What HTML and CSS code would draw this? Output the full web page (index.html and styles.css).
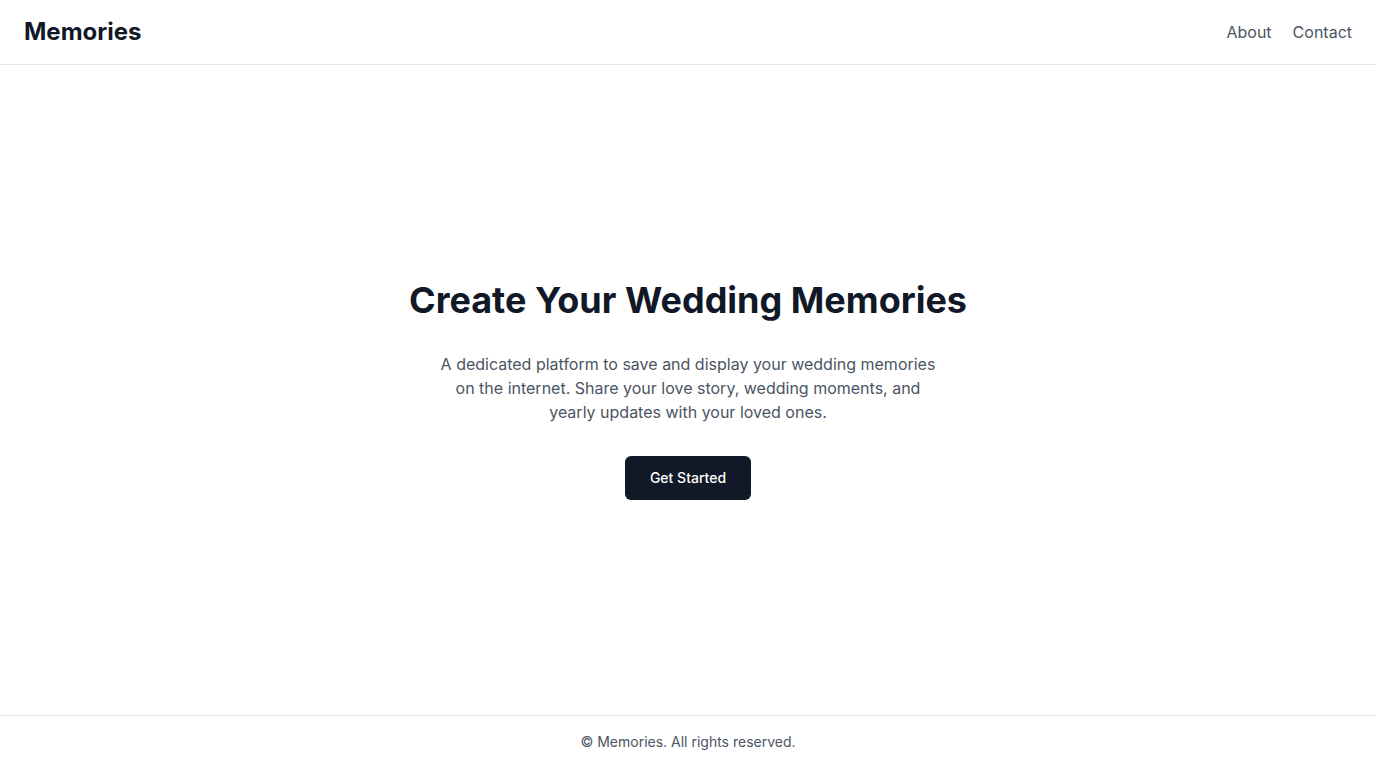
FILE: index.html
```html
<!DOCTYPE html>
<html lang="en">
<head>
<meta charset="utf-8">
<title>Memories</title>
<link rel="stylesheet" href="styles.css">
</head>
<body>
<div class="page">
  <header class="header">
    <a class="logo" href="#">Memories</a>
    <nav class="nav">
      <a href="#">About</a>
      <a href="#">Contact</a>
    </nav>
  </header>
  <main class="main">
    <section class="hero">
      <h1 class="title">Create Your Wedding Memories</h1>
      <p class="lead">A dedicated platform to save and display your wedding memories on the internet. Share your love story, wedding moments, and yearly updates with your loved ones.</p>
      <a class="btn" href="#">Get Started</a>
    </section>
  </main>
  <footer class="footer">© Memories. All rights reserved.</footer>
</div>
</body>
</html>
```
FILE: styles.css
```css
* { box-sizing: border-box; }
html, body { margin: 0; padding: 0; }
body {
  font-family: Inter, "Noto Sans", sans-serif;
  color: #111827;
  background: #fff;
}
a { text-decoration: none; color: inherit; }
.page {
  min-height: 100vh;
  display: flex;
  flex-direction: column;
}
.header {
  height: 65px;
  padding: 0 24px;
  display: flex;
  align-items: center;
  justify-content: space-between;
  border-bottom: 1px solid #e5e7eb;
}
.logo {
  font-size: 24px;
  line-height: 32px;
  font-weight: 700;
  color: #111827;
}
.nav {
  display: flex;
  gap: 21px;
  font-size: 16px;
  line-height: 24px;
}
.nav a { color: #4b5563; }
.main {
  flex: 1;
  display: flex;
  align-items: center;
  justify-content: center;
}
.hero {
  display: flex;
  flex-direction: column;
  align-items: center;
  text-align: center;
}
.title {
  margin: 0 0 32px;
  font-size: 36px;
  line-height: 40px;
  font-weight: 700;
  color: #111827;
}
.lead {
  margin: 0 0 32px;
  max-width: 512px;
  font-size: 16px;
  line-height: 24px;
  color: #4b5563;
}
.btn {
  display: inline-block;
  padding: 12px 25px;
  font-size: 14px;
  line-height: 20px;
  font-weight: 500;
  color: #fff;
  background: #111827;
  border-radius: 6px;
}
.footer {
  border-top: 1px solid #e5e7eb;
  padding: 16px 0;
  text-align: center;
  font-size: 14px;
  line-height: 20px;
  color: #4b5563;
}
```
